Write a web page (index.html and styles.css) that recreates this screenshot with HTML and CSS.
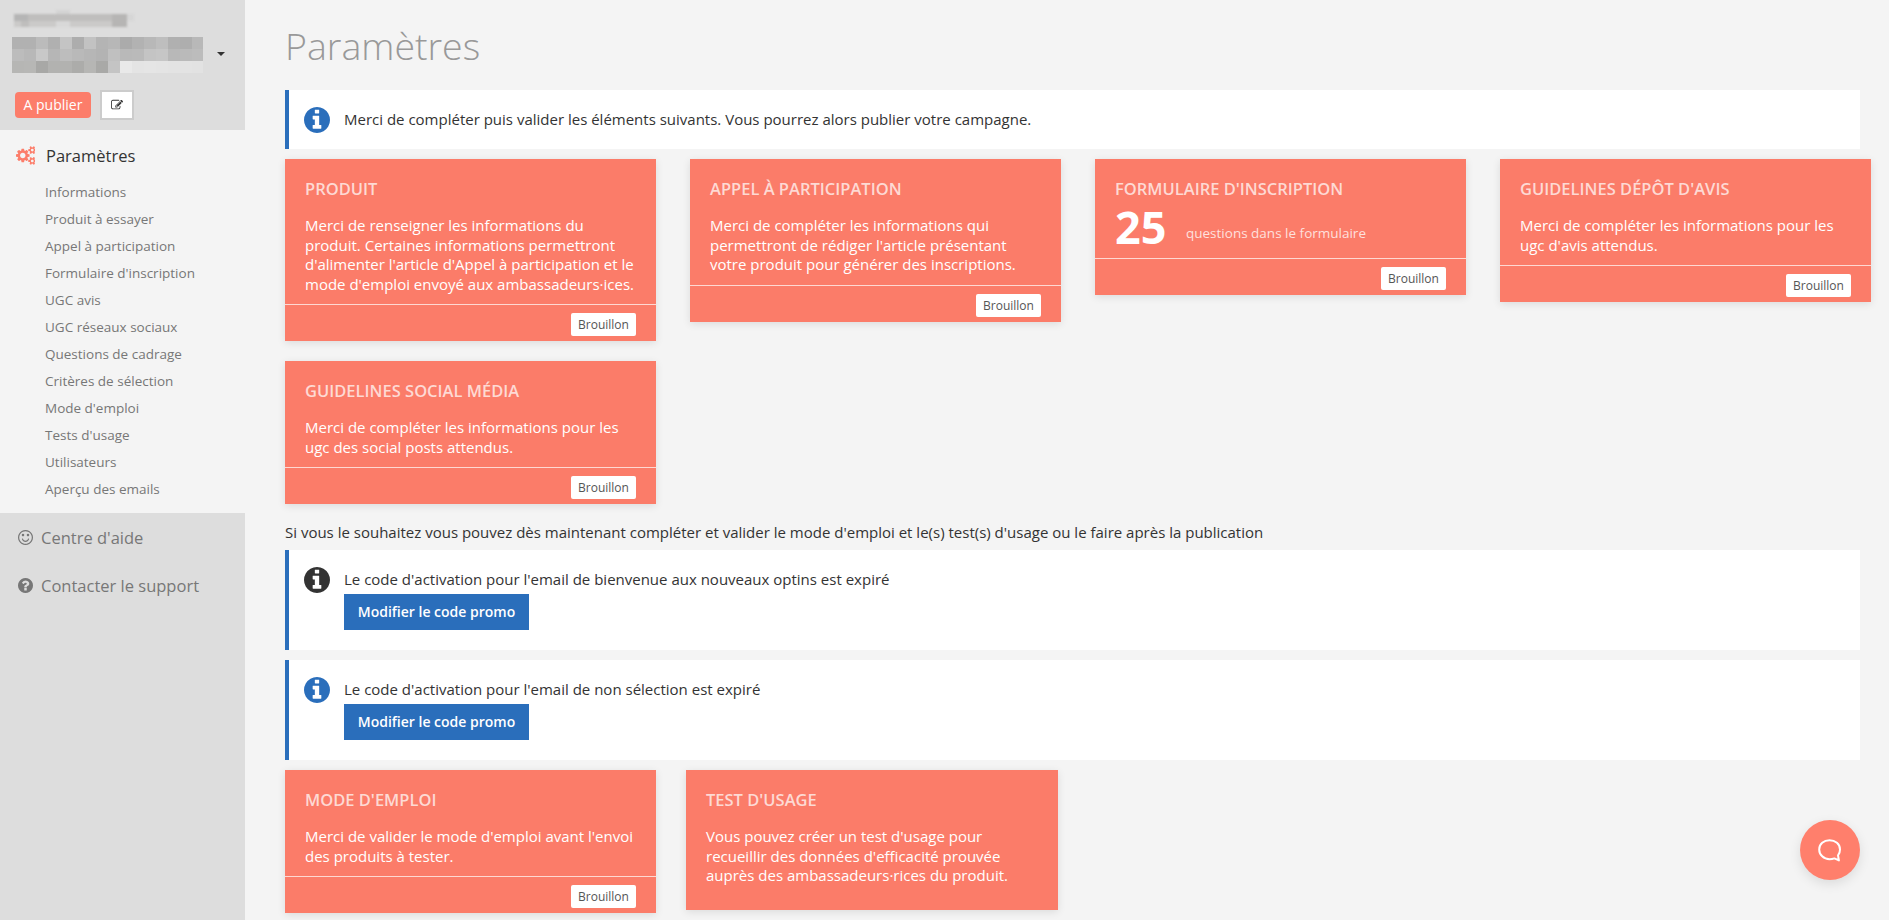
FILE: index.html
```html
<!DOCTYPE html>
<html lang="fr">
<head>
<meta charset="utf-8">
<title>Paramètres</title>
<link rel="stylesheet" href="styles.css">
</head>
<body>
<div class="app">
  <aside class="sidebar">
    <div class="side-top">
      <div class="campaign">
        <svg class="blur" width="205" height="30" viewBox="0 0 205 30" aria-hidden="true">
          <rect x="14" y="14" width="113" height="7" fill="#bfbebd"/>
          <rect x="14" y="21" width="113" height="6" fill="#cbcac9"/>
          <rect x="14" y="14" width="14" height="7" fill="#b5b5b5"/>
          <rect x="56" y="10" width="14" height="4" fill="#d4d4d4"/>
          <rect x="112" y="14" width="15" height="13" fill="#b6b5b4"/>
          <rect x="127" y="14" width="7" height="7" fill="#d6d6d6"/>
          <rect x="21" y="21" width="8" height="6" fill="#bfbebd"/>
          <rect x="56" y="21" width="14" height="6" fill="#d8d8d8"/>
        </svg>
        <svg class="blur-main" width="205" height="46" viewBox="0 30 205 46" aria-hidden="true">
          <rect x="12" y="37" width="12" height="12" fill="#b1b1b1"/><rect x="24" y="37" width="12" height="12" fill="#b1b1b1"/><rect x="36" y="37" width="12" height="12" fill="#bbb"/><rect x="48" y="37" width="12" height="12" fill="#b0b0b0"/><rect x="60" y="37" width="12" height="12" fill="#c4c4c4"/><rect x="72" y="37" width="12" height="12" fill="#adadad"/><rect x="84" y="37" width="12" height="12" fill="#c2c2c2"/><rect x="96" y="37" width="12" height="12" fill="#b4b4b4"/><rect x="108" y="37" width="12" height="12" fill="#b7b7b7"/><rect x="120" y="37" width="12" height="12" fill="#ababab"/><rect x="132" y="37" width="12" height="12" fill="#b2b2b2"/><rect x="144" y="37" width="12" height="12" fill="#b8b8b8"/><rect x="156" y="37" width="12" height="12" fill="#bebebe"/><rect x="168" y="37" width="12" height="12" fill="#b0b0b0"/><rect x="180" y="37" width="12" height="12" fill="#aeaeae"/><rect x="192" y="37" width="11" height="12" fill="#b8b8b8"/>
          <rect x="12" y="49" width="12" height="12" fill="#bcbcbc"/><rect x="24" y="49" width="12" height="12" fill="#b8b8b8"/><rect x="36" y="49" width="12" height="12" fill="#c8c8c8"/><rect x="48" y="49" width="12" height="12" fill="#b6b6b6"/><rect x="60" y="49" width="12" height="12" fill="#bdbdbd"/><rect x="72" y="49" width="12" height="12" fill="#b9b9b9"/><rect x="84" y="49" width="12" height="12" fill="#b6b6b6"/><rect x="96" y="49" width="12" height="12" fill="#b3b3b3"/><rect x="108" y="49" width="12" height="12" fill="#c0c0c0"/><rect x="120" y="49" width="12" height="12" fill="#b9b9b9"/><rect x="132" y="49" width="12" height="12" fill="#bababa"/><rect x="144" y="49" width="12" height="12" fill="#c4c4c4"/><rect x="156" y="49" width="12" height="12" fill="#c6c6c6"/><rect x="168" y="49" width="12" height="12" fill="#b8b8b8"/><rect x="180" y="49" width="12" height="12" fill="#bababa"/><rect x="192" y="49" width="11" height="12" fill="#bcbcbc"/>
          <rect x="12" y="61" width="12" height="12" fill="#b6b6b4"/><rect x="24" y="61" width="12" height="12" fill="#b7b7b5"/><rect x="36" y="61" width="12" height="12" fill="#a8a8a6"/><rect x="48" y="61" width="12" height="12" fill="#b2b2b0"/><rect x="60" y="61" width="12" height="12" fill="#b2b2b0"/><rect x="72" y="61" width="12" height="12" fill="#acacaa"/><rect x="84" y="61" width="12" height="12" fill="#b6b6b4"/><rect x="96" y="61" width="12" height="12" fill="#a9a9a7"/><rect x="108" y="61" width="12" height="12" fill="#c4c4c4"/><rect x="120" y="61" width="12" height="12" fill="#e9e9e9"/><rect x="132" y="61" width="12" height="12" fill="#e4e4e4"/><rect x="144" y="61" width="12" height="12" fill="#e5e5e5"/><rect x="156" y="61" width="12" height="12" fill="#e4e4e4"/><rect x="168" y="61" width="12" height="12" fill="#e3e3e3"/><rect x="180" y="61" width="12" height="12" fill="#e3e3e3"/><rect x="192" y="61" width="11" height="12" fill="#e2e2e2"/>
        </svg>
        <span class="caret"></span>
      </div>
      <div class="status">
        <span class="publish">A publier</span>
        <span class="edit-btn">
          <svg class="edit-ico" viewBox="0 0 1792 1792"><path d="M888 1184l116-116-152-152-116 116v56h96v96h56zm440-720q-16-16-33 1l-350 350q-17 17-1 33t33-1l350-350q17-17 1-33zm80 594v190q0 119-84.5 203.5t-203.5 84.5h-832q-119 0-203.5-84.5t-84.5-203.5v-832q0-119 84.5-203.5t203.5-84.5h832q63 0 117 25 15 7 18 23 3 17-9 29l-49 49q-14 14-32 8-23-6-45-6h-832q-66 0-113 47t-47 113v832q0 66 47 113t113 47h832q66 0 113-47t47-113v-126q0-13 9-22l64-64q15-15 35-7t20 29zm-96-738l288 288-672 672h-288v-288zm444 132l-92 92-288-288 92-92q28-28 68-28t68 28l152 152q28 28 28 68t-28 68z"/></svg>
        </span>
      </div>
    </div>
    <nav class="side-nav">
      <div class="nav-head">
        <svg class="cogs" viewBox="0 0 1792 1792"><path d="M896 896q0-106-75-181t-181-75-181 75-75 181 75 181 181 75 181-75 75-181zm768 512q0-52-38-90t-90-38-90 38-38 90q0 53 37.5 90.5t90.5 37.5 90.5-37.5 37.5-90.5zm0-1024q0-52-38-90t-90-38-90 38-38 90q0 53 37.5 90.5t90.5 37.5 90.5-37.5 37.5-90.5zm-384 421v185q0 10-7 19.5t-16 10.5l-155 24q-11 35-32 76 34 48 90 115 7 11 7 20 0 12-7 19-23 30-82.5 89.5t-78.5 59.5q-11 0-21-7l-115-90q-37 19-77 31-11 108-23 155-7 24-30 24h-186q-11 0-20-7.5t-10-17.5l-23-153q-34-10-75-31l-118 89q-7 7-20 7-11 0-21-8-144-133-144-160 0-9 7-19 10-14 41-53t47-61q-23-44-35-82l-152-24q-10-1-17-9.5t-7-19.5v-185q0-10 7-19.5t16-10.5l155-24q11-35 32-76-34-48-90-115-7-11-7-20 0-12 7-20 22-30 82-89t79-59q11 0 21 7l115 90q34-18 77-32 11-108 23-154 7-24 30-24h186q11 0 20 7.5t10 17.5l23 153q34 10 75 31l118-89q8-7 20-7 11 0 21 8 144 133 144 160 0 8-7 19-12 16-42 54t-45 60q23 48 34 82l152 23q10 2 17 10.5t7 19.5zm640 533v140q0 16-149 31-12 27-30 52 51 113 51 138 0 4-4 7-122 71-124 71-8 0-46-47t-52-68q-20 2-30 2t-30-2q-14 21-52 68t-46 47q-2 0-124-71-4-3-4-7 0-25 51-138-18-25-30-52-149-15-149-31v-140q0-16 149-31 13-29 30-52-51-113-51-138 0-4 4-7 4-2 35-20t59-34 30-16q8 0 46 46.5t52 67.5q20-2 30-2t30 2q51-71 92-112l6-2q4 0 124 70 4 3 4 7 0 25-51 138 17 23 30 52 149 15 149 31zm0-1024v140q0 16-149 31-12 27-30 52 51 113 51 138 0 4-4 7-122 71-124 71-8 0-46-47t-52-68q-20 2-30 2t-30-2q-14 21-52 68t-46 47q-2 0-124-71-4-3-4-7 0-25 51-138-18-25-30-52-149-15-149-31v-140q0-16 149-31 13-29 30-52-51-113-51-138 0-4 4-7 4-2 35-20t59-34 30-16q8 0 46 46.5t52 67.5q20-2 30-2t30 2q51-71 92-112l6-2q4 0 124 70 4 3 4 7 0 25-51 138 17 23 30 52 149 15 149 31z"/></svg>
        <span>Paramètres</span>
      </div>
      <ul class="nav-list">
        <li>Informations</li>
        <li>Produit à essayer</li>
        <li>Appel à participation</li>
        <li>Formulaire d'inscription</li>
        <li>UGC avis</li>
        <li>UGC réseaux sociaux</li>
        <li>Questions de cadrage</li>
        <li>Critères de sélection</li>
        <li>Mode d'emploi</li>
        <li>Tests d'usage</li>
        <li>Utilisateurs</li>
        <li>Aperçu des emails</li>
      </ul>
    </nav>
    <div class="side-bottom">
      <div class="help-link">
        <svg class="help-ico" viewBox="0 128 1536 1536"><path d="M1134 1075q-37 121-138 195t-228 74-228-74-138-195q-8-25 4-48.5t38-31.5q25-8 48.5 4t31.5 38q25 80 92.5 129.5t151.5 49.5 151.5-49.5 92.5-129.5q8-26 32-38t49-4 37 31.5 4 48.5zm-494-435q0 53-37.5 90.5t-90.5 37.5-90.5-37.5-37.5-90.5 37.5-90.5 90.5-37.5 90.5 37.5 37.5 90.5zm512 0q0 53-37.5 90.5t-90.5 37.5-90.5-37.5-37.5-90.5 37.5-90.5 90.5-37.5 90.5 37.5 37.5 90.5zm256 256q0-130-51-248.5t-136.5-204-204-136.5-248.5-51-248.5 51-204 136.5-136.5 204-51 248.5 51 248.5 136.5 204 204 136.5 248.5 51 248.5-51 204-136.5 136.5-204 51-248.5zm128 0q0 209-103 385.5t-279.5 279.5-385.5 103-385.5-103-279.5-279.5-103-385.5 103-385.5 279.5-279.5 385.5-103 385.5 103 279.5 279.5 103 385.5z"/></svg>
        <span>Centre d'aide</span>
      </div>
      <div class="help-link">
        <svg class="help-ico" viewBox="128 128 1536 1536"><path d="M1024 1376v-192q0-14-9-23t-23-9h-192q-14 0-23 9t-9 23v192q0 14 9 23t23 9h192q14 0 23-9t9-23zm256-672q0-88-55.5-163t-138.5-116-170-41q-243 0-371 213-15 24 8 42l132 100q7 6 19 6 16 0 25-12 53-68 86-92 34-24 86-24 48 0 85.5 26t37.5 59q0 38-20 61t-68 45q-63 28-115.5 86.5t-52.5 125.5v36q0 14 9 23t23 9h192q14 0 23-9t9-23q0-19 21.5-49.5t54.5-49.5q32-18 49-28.5t46-35 44.5-48 28-60.5 12.5-81zm384 192q0 209-103 385.5t-279.5 279.5-385.5 103-385.5-103-279.5-279.5-103-385.5 103-385.5 279.5-279.5 385.5-103 385.5 103 279.5 279.5 103 385.5z"/></svg>
        <span>Contacter le support</span>
      </div>
    </div>
  </aside>

  <main class="main">
    <h1 class="page-title">Paramètres</h1>

    <div class="alert alert-single">
      <svg class="info-ico info-blue" viewBox="128 128 1536 1536"><path d="M1152 1376v-160q0-14-9-23t-23-9h-96v-512q0-14-9-23t-23-9h-320q-14 0-23 9t-9 23v160q0 14 9 23t23 9h96v320h-96q-14 0-23 9t-9 23v160q0 14 9 23t23 9h448q14 0 23-9t9-23zm-128-896v-160q0-14-9-23t-23-9h-192q-14 0-23 9t-9 23v160q0 14 9 23t23 9h192q14 0 23-9t9-23zm640 416q0 209-103 385.5t-279.5 279.5-385.5 103-385.5-103-279.5-279.5-103-385.5 103-385.5 279.5-279.5 385.5-103 385.5 103 279.5 279.5 103 385.5z"/></svg>
      <div class="alert-body"><p class="alert-text">Merci de compléter puis valider les éléments suivants. Vous pourrez alors publier votre campagne.</p></div>
    </div>

    <section class="cards cards-top">
      <article class="card">
        <div class="card-body">
          <h2 class="card-title">PRODUIT</h2>
          <p class="card-text">Merci de renseigner les informations du produit. Certaines informations permettront d'alimenter l'article d'Appel à participation et le mode d'emploi envoyé aux ambassadeurs·ices.</p>
        </div>
        <div class="card-foot"><span class="badge">Brouillon</span></div>
      </article>
      <article class="card">
        <div class="card-body">
          <h2 class="card-title">APPEL À PARTICIPATION</h2>
          <p class="card-text">Merci de compléter les informations qui permettront de rédiger l'article présentant votre produit pour générer des inscriptions.</p>
        </div>
        <div class="card-foot"><span class="badge">Brouillon</span></div>
      </article>
      <article class="card">
        <div class="card-body card-body-stat">
          <h2 class="card-title card-title-stat">FORMULAIRE D'INSCRIPTION</h2>
          <div class="stat"><span class="stat-num">25</span><span class="stat-label">questions dans le formulaire</span></div>
        </div>
        <div class="card-foot"><span class="badge">Brouillon</span></div>
      </article>
      <article class="card">
        <div class="card-body">
          <h2 class="card-title">GUIDELINES DÉPÔT D'AVIS</h2>
          <p class="card-text">Merci de compléter les informations pour les ugc d'avis attendus.</p>
        </div>
        <div class="card-foot"><span class="badge">Brouillon</span></div>
      </article>
    </section>

    <section class="cards cards-second">
      <article class="card">
        <div class="card-body">
          <h2 class="card-title">GUIDELINES SOCIAL MÉDIA</h2>
          <p class="card-text">Merci de compléter les informations pour les ugc des social posts attendus.</p>
        </div>
        <div class="card-foot"><span class="badge">Brouillon</span></div>
      </article>
    </section>

    <p class="note">Si vous le souhaitez vous pouvez dès maintenant compléter et valider le mode d'emploi et le(s) test(s) d'usage ou le faire après la publication</p>

    <div class="alert">
      <svg class="info-ico info-dark" viewBox="128 128 1536 1536"><path d="M1152 1376v-160q0-14-9-23t-23-9h-96v-512q0-14-9-23t-23-9h-320q-14 0-23 9t-9 23v160q0 14 9 23t23 9h96v320h-96q-14 0-23 9t-9 23v160q0 14 9 23t23 9h448q14 0 23-9t9-23zm-128-896v-160q0-14-9-23t-23-9h-192q-14 0-23 9t-9 23v160q0 14 9 23t23 9h192q14 0 23-9t9-23zm640 416q0 209-103 385.5t-279.5 279.5-385.5 103-385.5-103-279.5-279.5-103-385.5 103-385.5 279.5-279.5 385.5-103 385.5 103 279.5 279.5 103 385.5z"/></svg>
      <div class="alert-body">
        <p class="alert-text">Le code d'activation pour l'email de bienvenue aux nouveaux optins est expiré</p>
        <a class="promo-btn">Modifier le code promo</a>
      </div>
    </div>

    <div class="alert">
      <svg class="info-ico info-blue" viewBox="128 128 1536 1536"><path d="M1152 1376v-160q0-14-9-23t-23-9h-96v-512q0-14-9-23t-23-9h-320q-14 0-23 9t-9 23v160q0 14 9 23t23 9h96v320h-96q-14 0-23 9t-9 23v160q0 14 9 23t23 9h448q14 0 23-9t9-23zm-128-896v-160q0-14-9-23t-23-9h-192q-14 0-23 9t-9 23v160q0 14 9 23t23 9h192q14 0 23-9t9-23zm640 416q0 209-103 385.5t-279.5 279.5-385.5 103-385.5-103-279.5-279.5-103-385.5 103-385.5 279.5-279.5 385.5-103 385.5 103 279.5 279.5 103 385.5z"/></svg>
      <div class="alert-body">
        <p class="alert-text">Le code d'activation pour l'email de non sélection est expiré</p>
        <a class="promo-btn">Modifier le code promo</a>
      </div>
    </div>

    <section class="cards cards-bottom">
      <article class="card">
        <div class="card-body">
          <h2 class="card-title">MODE D'EMPLOI</h2>
          <p class="card-text">Merci de valider le mode d'emploi avant l'envoi des produits à tester.</p>
        </div>
        <div class="card-foot"><span class="badge">Brouillon</span></div>
      </article>
      <article class="card card-wide">
        <div class="card-body card-body-solo">
          <h2 class="card-title">TEST D'USAGE</h2>
          <p class="card-text">Vous pouvez créer un test d'usage pour recueillir des données d'efficacité prouvée auprès des ambassadeurs·rices du produit.</p>
        </div>
      </article>
    </section>
  </main>
</div>

<button class="chat" aria-label="Aide">
  <svg class="chat-ico" viewBox="0 0 24 23"><path d="M11.5 1.2c5.8 0 10.5 3.8 10.5 9.2 0 2.6-.8 4.6-2 6l.9 5-4.5-2c-1.4.5-3 .8-4.9.8-5.7 0-10.3-4.4-10.3-9.8S5.8 1.2 11.5 1.2z"/></svg>
</button>
</body>
</html>
```

FILE: styles.css
```css
* { box-sizing: border-box; }
html, body { margin: 0; height: 100%; }
body {
  background: #f4f4f4;
  color: #333;
  font-family: "Open Sans", "Liberation Sans", sans-serif;
  font-size: 15px;
  overflow: hidden;
}
.app { display: flex; height: 920px; overflow: hidden; }

/* Sidebar */
.sidebar { width: 245px; flex: none; display: flex; flex-direction: column; }
.side-top { height: 130px; background: #ddd; display: flex; flex-direction: column; }
.campaign { height: 90px; position: relative; overflow: hidden; }
.blur { display: block; filter: blur(1px); height: 30px; }
.blur-main { display: block; filter: blur(0.5px); }
.caret {
  position: absolute; left: 217px; top: 52px;
  border-left: 4px solid transparent; border-right: 4px solid transparent;
  border-top: 4px solid #333;
}
.status { display: flex; align-items: center; gap: 9px; padding-left: 15px; height: 30px; }
.publish {
  width: 76px; height: 26px; border-radius: 4px; background: #fc7d6a; color: #fff;
  font-size: 14px; line-height: 26px; text-align: center;
}
.edit-btn {
  width: 34px; height: 30px; background: #fff; border: 2px solid #ccc;
  display: flex; align-items: center; justify-content: center;
}
.edit-ico { width: 12px; height: 12px; fill: #333; }

.side-nav { height: 383px; padding-top: 12px; }
.nav-head { display: flex; align-items: center; height: 26px; padding-left: 16px; font-size: 16.5px; color: #333; }
.cogs { width: 19px; height: 19px; fill: #fc7d6a; margin-right: 11px; }
.nav-list { list-style: none; margin: 11px 0 0; padding: 0 0 0 45px; }
.nav-list li { height: 27px; line-height: 27px; font-size: 13.5px; color: #777; }

.side-bottom { flex: 1; background: #ddd; padding-top: 12px; }
.help-link { display: flex; align-items: center; height: 24px; margin-bottom: 24px; padding-left: 18px; font-size: 16.5px; color: #777; }
.help-ico { width: 15px; height: 15px; fill: #777; margin-right: 8px; }

/* Main */
.main { flex: 1; min-width: 0; padding: 0 29px 0 40px; }
.page-title {
  margin: 0; height: 90px; padding-top: 20px;
  font-size: 37.5px; font-weight: 300; line-height: 51px; color: #999;
}
.alert {
  display: flex; background: #fff; border-left: 4px solid #2a6ebb;
  padding: 20px 0 20px 15px; margin-bottom: 10px;
}
.info-ico { width: 26px; height: 26px; flex: none; margin: -3px 14px 0 0; }
.alert-single { height: 59px; }
.info-blue { fill: #2a6ebb; }
.info-dark { fill: #333; }
.alert-text { margin: 0; line-height: 19px; color: #333; }
.promo-btn {
  display: block; width: 185px; height: 36px; margin-top: 5px;
  background: #2a6ebb; color: #fff; font-size: 14px; font-weight: 600; line-height: 36px; text-align: center;
}

.cards { display: flex; align-items: flex-start; }
.cards-top { gap: 34px; margin: 0 -11px 20px 0; }
.cards-second { margin-bottom: 19px; }
.cards-bottom { gap: 30px; }
.card { width: 371px; flex: none; background: #fb7c69; box-shadow: 0 2px 8px rgba(0, 0, 0, .1); }
.card-wide { width: 372px; }
.card-body { padding: 19px 20px 10px; }
.card-body-stat { padding-bottom: 0; height: 99px; }
.card-body-solo { padding-bottom: 24.5px; }
.card-title {
  margin: 0 0 16px; font-size: 16.5px; font-weight: 600; line-height: 22px;
  color: rgba(255, 255, 255, .72);
}
.card-title-stat { margin-bottom: 0; }
.card-text { margin: 0; color: #fff; line-height: 19.5px; }
.card-foot {
  height: 37px; border-top: 1px solid rgba(255, 255, 255, .7);
  padding: 8px 20px 0 0; display: flex; justify-content: flex-end; align-items: flex-start;
}
.badge {
  width: 65px; height: 23px; border-radius: 2px; background: #fff; color: #555;
  font-size: 12px; line-height: 23px; text-align: center;
}
.stat { display: flex; align-items: baseline; }
.stat-num { font-size: 45px; font-weight: 700; line-height: 54px; color: #fff; width: 71px; }
.stat-label { font-size: 13.5px; color: rgba(255, 255, 255, .78); position: relative; top: -6px; }

.note { margin: 0 0 8px; line-height: 19px; color: #333; }

.chat {
  position: fixed; left: 1800px; top: 820px; width: 60px; height: 60px; padding: 0;
  border: 0; border-radius: 50%; background: #ff7f6c;
  box-shadow: 0 4px 12px rgba(0, 0, 0, .1);
  display: flex; align-items: center; justify-content: center;
}
.chat-ico { width: 24px; height: 23px; fill: none; stroke: #fff; stroke-width: 2; stroke-linejoin: round; }
```
